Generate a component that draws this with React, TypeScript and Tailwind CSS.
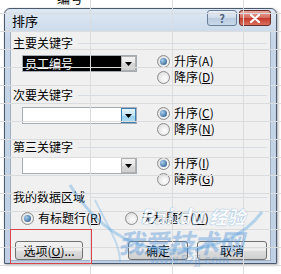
import React from "react";

const cjk = "font-['Noto_Sans_CJK_SC','Noto_Sans',sans-serif]";

function Radio({ checked }: { checked?: boolean }) {
    return (
        <span className="flex h-[13px] w-[13px] shrink-0 items-center justify-center rounded-full border border-[#8c8c8c] bg-[radial-gradient(circle_at_60%_60%,#ffffff,#d4d4d4)]">
            {checked && <span className="h-[7px] w-[7px] rounded-full bg-[radial-gradient(circle_at_35%_35%,#a6cff0,#1d4d80)]" />}
        </span>
    );
}

function RadioRow({ text, hotkey, checked }: { text: string; hotkey: string; checked?: boolean }) {
    return (
        <div className="flex h-[16px] items-center gap-[4px]">
            <Radio checked={checked} />
            <span className="text-[12px] leading-none text-black">
                {text}(<span className="underline">{hotkey}</span>)
            </span>
        </div>
    );
}

function GroupHeader({ label }: { label: string }) {
    return (
        <div className="flex h-[14px] items-center">
            <span className="text-[12px] leading-none text-black">{label}</span>
            <div className="ml-[5px] mr-[3px] h-px flex-1 bg-[#d8dde3]" />
        </div>
    );
}

function Combo({ value, hover }: { value?: string; hover?: boolean }) {
    return (
        <div className="flex h-[17px] w-[115px] border border-[#a5acb5] bg-white">
            <div className={`flex flex-1 items-center px-[2px] text-[12px] leading-none ${value ? "bg-black text-white" : ""}`}>
                {value}
            </div>
            <div
                className={`flex w-[15px] items-center justify-center border ${
                    hover
                        ? "border-[#3c7fb1] bg-[linear-gradient(#e5f4fc,#c4e5f6_50%,#98d1ef_50%,#b2dcf2)]"
                        : "border-[#b0b0b0] bg-[linear-gradient(#f2f2f2,#e6e6e6_50%,#d6d6d6_50%,#cfcfcf)]"
                }`}
            >
                <svg width="7" height="4" viewBox="0 0 7 4">
                    <path d="M0 0h7L3.5 4z" fill="#000" />
                </svg>
            </div>
        </div>
    );
}

function SortRow({ value, hover, up, down }: { value?: string; hover?: boolean; up: string; down: string }) {
    return (
        <div className="flex items-start">
            <div className="ml-[9px] mt-[2px]">
                <Combo value={value} hover={hover} />
            </div>
            <div className="ml-[20px] flex flex-col">
                <RadioRow text="升序" hotkey={up} checked />
                <RadioRow text="降序" hotkey={down} />
            </div>
        </div>
    );
}

function Button({ children, className }: { children: React.ReactNode; className: string }) {
    return (
        <div
            className={`flex h-[19px] items-center justify-center rounded-[3px] border border-[#707070] bg-[linear-gradient(#f2f2f2,#ebebeb_50%,#dddddd_50%,#cfcfcf)] text-[12px] leading-none text-black ${className}`}
        >
            {children}
        </div>
    );
}

export default function App() {
    return (
        <div className={`relative h-[274px] w-[281px] overflow-hidden bg-white ${cjk}`}>
            {/* spreadsheet behind */}
            <div className="absolute inset-0 bg-[linear-gradient(#dadcdd_1px,transparent_1px)] bg-[size:100%_18px] bg-[position:0_-5px]" />
            <div className="absolute left-[90px] top-0 h-full w-px bg-[#dadcdd]" />
            <div className="absolute left-[172px] top-0 h-full w-px bg-[#dadcdd]" />
            <div className="absolute left-[243px] top-0 h-full w-px bg-[#dadcdd]" />
            <div className="absolute left-[30px] top-[-11px] text-[13px] font-bold leading-[16px] text-black">一</div>
            <div className="absolute left-[57px] top-[-10px] text-[13px] leading-[16px] text-black">编号</div>

            {/* dialog */}
            <div className="pl-[4px] pt-[8px]">
                <div className="flex h-[256px] w-[273px] flex-col rounded-t-[6px] border border-[#4a596b] bg-[linear-gradient(#dde8f4,#c6d6e8_12%,#bfd0e4)] px-[5px] pb-[2px] shadow-[1px_1px_3px_rgba(0,0,0,0.35)]">
                    {/* title bar */}
                    <div className="flex h-[22px] shrink-0 items-center">
                        <span className="ml-[2px] text-[13px] leading-none text-black">排序</span>
                        <div className="ml-auto mt-[-4px] flex gap-[2px]">
                            <div className="flex h-[16px] w-[30px] items-center justify-center rounded-[3px] border border-[#6a7f98] bg-[linear-gradient(#e8eff7,#cfdbe9_50%,#b9cbe0_50%,#c9d8ea)] text-[11px] font-bold leading-none text-[#4b5f78]">
                                ?
                            </div>
                            <div className="flex h-[16px] w-[32px] items-center justify-center rounded-[3px] border border-[#6b2c27] bg-[linear-gradient(#e9a99e,#d46a5c_50%,#c4392b_50%,#d7705f)]">
                                <svg width="10" height="9" viewBox="0 0 10 9">
                                    <path d="M1 1l8 7M9 1l-8 7" stroke="#fff" strokeWidth="2.2" strokeLinecap="round" />
                                </svg>
                            </div>
                        </div>
                    </div>

                    {/* client area */}
                    <div className="flex flex-1 flex-col border border-[#9fb0c4] bg-[#f0f0f0] pl-[2px]">
                        <div className="mt-[4px]">
                            <GroupHeader label="主要关键字" />
                        </div>
                        <div className="mt-[3px]">
                            <SortRow value="员工编号" up="A" down="D" />
                        </div>
                        <div className="mt-[3px]">
                            <GroupHeader label="次要关键字" />
                        </div>
                        <div className="mt-[3px]">
                            <SortRow hover up="C" down="N" />
                        </div>
                        <div className="mt-[3px]">
                            <GroupHeader label="第三关键字" />
                        </div>
                        <div className="mt-[1px]">
                            <SortRow up="I" down="G" />
                        </div>
                        <div className="mt-[3px]">
                            <GroupHeader label="我的数据区域" />
                        </div>
                        <div className="ml-[8px] mt-[6px] flex">
                            <div className="w-[104px]">
                                <RadioRow text="有标题行" hotkey="R" checked />
                            </div>
                            <RadioRow text="无标题行" hotkey="W" />
                        </div>
                        <div className="mt-[15px] flex pr-[3px]">
                            <Button className="ml-[2px] w-[68px]">
                                选项(<span className="underline">O</span>)...
                            </Button>
                            <Button className="ml-[45px] w-[60px]">确定</Button>
                            <Button className="ml-[9px] w-[70px]">取消</Button>
                        </div>
                    </div>
                </div>
            </div>

            {/* highlight box */}
            <div className="absolute left-[10px] top-[229px] h-[35px] w-[82px] border border-[#d9434b]" />

            {/* watermark */}
            <svg className="pointer-events-none absolute left-0 top-0" width="281" height="274" viewBox="0 0 281 274">
                <path d="M70 185 C 95 225, 130 250, 175 250 C 215 250, 245 235, 262 212" fill="none" stroke="#5aa7e0" strokeWidth="3" opacity="0.4" />
                <path d="M95 200 C 110 230, 120 245, 120 262" fill="none" stroke="#5aa7e0" strokeWidth="2" opacity="0.3" />
            </svg>
            <div className="pointer-events-none absolute left-[140px] top-[206px] text-[20px] font-bold italic leading-none text-white opacity-80 [text-shadow:0_0_1px_#7aaedc,0_0_1px_#7aaedc]">
                Bai<span className="ml-[6px]">du</span>
                <span className="ml-[6px] text-[18px]">经验</span>
            </div>
            <div className="pointer-events-none absolute left-[118px] top-[229px] text-[26px] font-bold italic leading-none tracking-[-1px] text-[#4a90d9] opacity-40">
                我爱技术网
            </div>
            <div className="pointer-events-none absolute left-[150px] top-[254px] font-['Liberation_Sans',sans-serif] text-[12px] font-bold leading-none text-[#4a90d9] opacity-30">
                www.52jj.com
            </div>
        </div>
    );
}
